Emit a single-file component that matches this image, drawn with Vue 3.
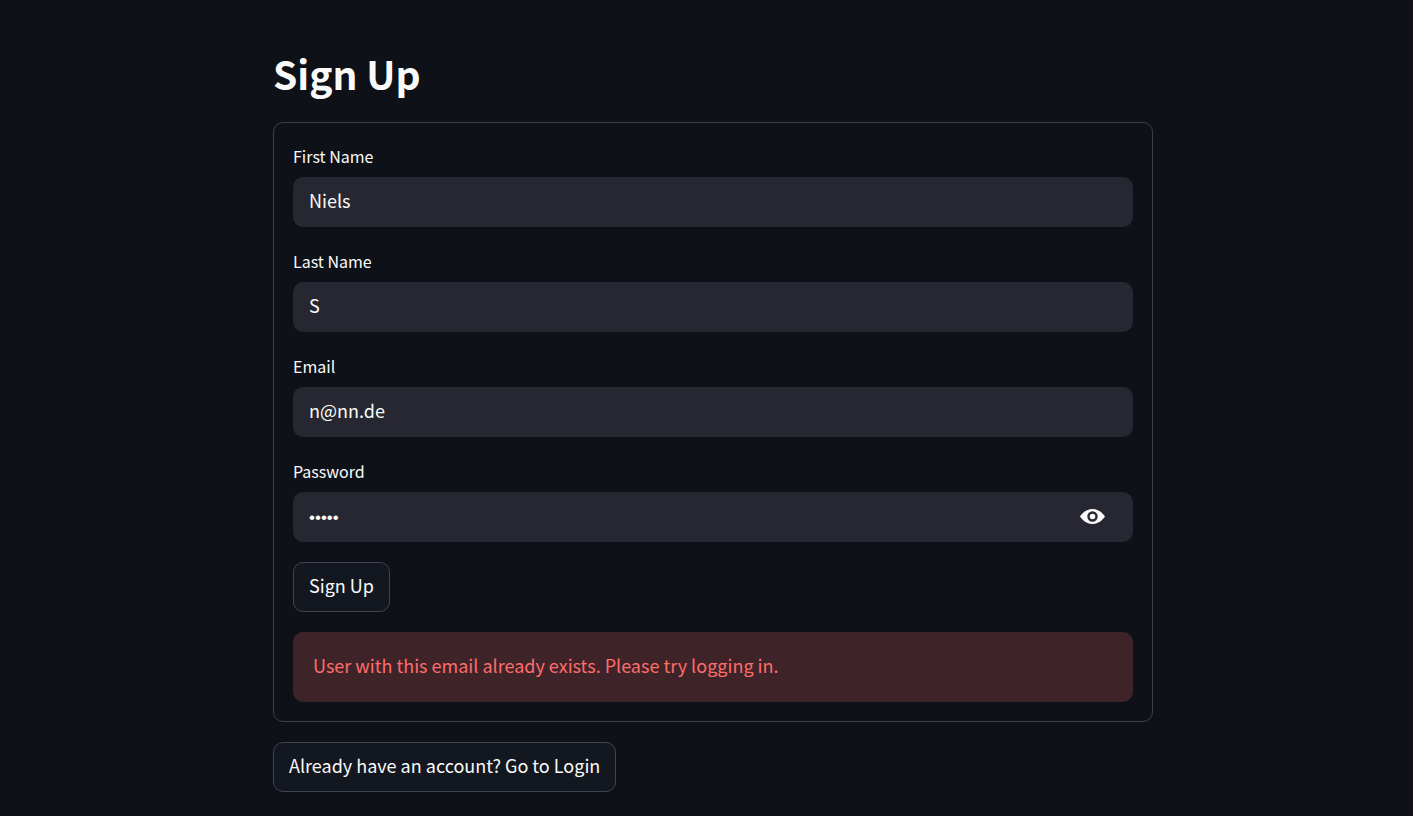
<script setup>
import { ref } from 'vue'

const fields = ref([
  { id: 'first-name', label: 'First Name', type: 'text', value: 'Niels' },
  { id: 'last-name', label: 'Last Name', type: 'text', value: 'S' },
  { id: 'email', label: 'Email', type: 'email', value: 'n@nn.de' },
  { id: 'password', label: 'Password', type: 'password', value: 'abcde' }
])
const revealed = ref(false)
</script>

<template>
  <main class="page">
    <div class="column">
      <h1>Sign Up</h1>
      <form class="card" @submit.prevent>
        <div v-for="field in fields" :key="field.id" class="field">
          <label :for="field.id">{{ field.label }}</label>
          <div class="box">
            <input
              :id="field.id"
              v-model="field.value"
              :type="field.type === 'password' && revealed ? 'text' : field.type"
              autocomplete="off"
            />
            <button
              v-if="field.type === 'password'"
              type="button"
              class="reveal"
              aria-label="Show password text"
              @click="revealed = !revealed"
            >
              <svg viewBox="0 0 25 15" aria-hidden="true">
                <path d="M12.5 0C4.5 0 0 7.5 0 7.5S4.5 15 12.5 15 25 7.5 25 7.5 20.5 0 12.5 0zM12.5 2.3a5.2 5.2 0 1 1 0 10.4a5.2 5.2 0 1 1 0-10.4zM12.5 4.7a2.8 2.8 0 1 0 0 5.6a2.8 2.8 0 1 0 0-5.6z" fill-rule="evenodd" />
              </svg>
            </button>
          </div>
        </div>
        <button type="submit" class="action">Sign Up</button>
        <div class="alert" role="alert">User with this email already exists. Please try logging in.</div>
      </form>
      <button type="button" class="action">Already have an account? Go to Login</button>
    </div>
  </main>
</template>

<style>
body {
  background: #0e1117;
}
</style>

<style scoped>
.page,
.page * {
  box-sizing: border-box;
}

.page {
  display: flex;
  justify-content: center;
  min-height: 100vh;
  padding: 44px 20px 24px 33px;
  background: #0e1117;
  color: #fafafa;
  font-family: "Source Sans Pro", "Noto Sans CJK SC", sans-serif;
  font-size: 18px;
}

.column {
  display: flex;
  flex-direction: column;
  align-items: flex-start;
  gap: 20px;
  width: 100%;
  max-width: 880px;
}

h1 {
  margin: 0;
  font-size: 39px;
  font-weight: 700;
  line-height: 58px;
}

.card {
  display: flex;
  flex-direction: column;
  align-items: flex-start;
  gap: 20px;
  width: 100%;
  padding: 19px;
  border: 1px solid #3e4044;
  border-radius: 10px;
}

.field {
  width: 100%;
}

label {
  display: block;
  margin-bottom: 7px;
  font-size: 16px;
  line-height: 28px;
}

.box {
  display: flex;
  align-items: center;
  height: 50px;
  border-radius: 10px;
  background: #262730;
}

input {
  flex: 1;
  min-width: 0;
  height: 100%;
  padding: 0 16px 4px;
  border: 0;
  outline: 0;
  background: transparent;
  color: inherit;
  font: inherit;
}

input[type="password"] {
  padding: 2px 16px 0;
  font-family: "Liberation Sans", sans-serif;
  font-size: 17px;
}

.reveal {
  display: flex;
  padding: 0 0 1px;
  margin-right: 28px;
  border: 0;
  background: transparent;
  color: inherit;
  cursor: pointer;
}

.reveal svg {
  width: 25px;
  height: 15px;
  fill: currentColor;
}

.action {
  height: 50px;
  padding: 0 15px 4px;
  border: 1px solid #41444c;
  border-radius: 10px;
  background: #131720;
  color: inherit;
  font: inherit;
  cursor: pointer;
}

.alert {
  width: 100%;
  padding: 18px 20px 22px;
  border-radius: 10px;
  background: #3e2428;
  color: #ff6c6c;
  line-height: 30px;
}
</style>
